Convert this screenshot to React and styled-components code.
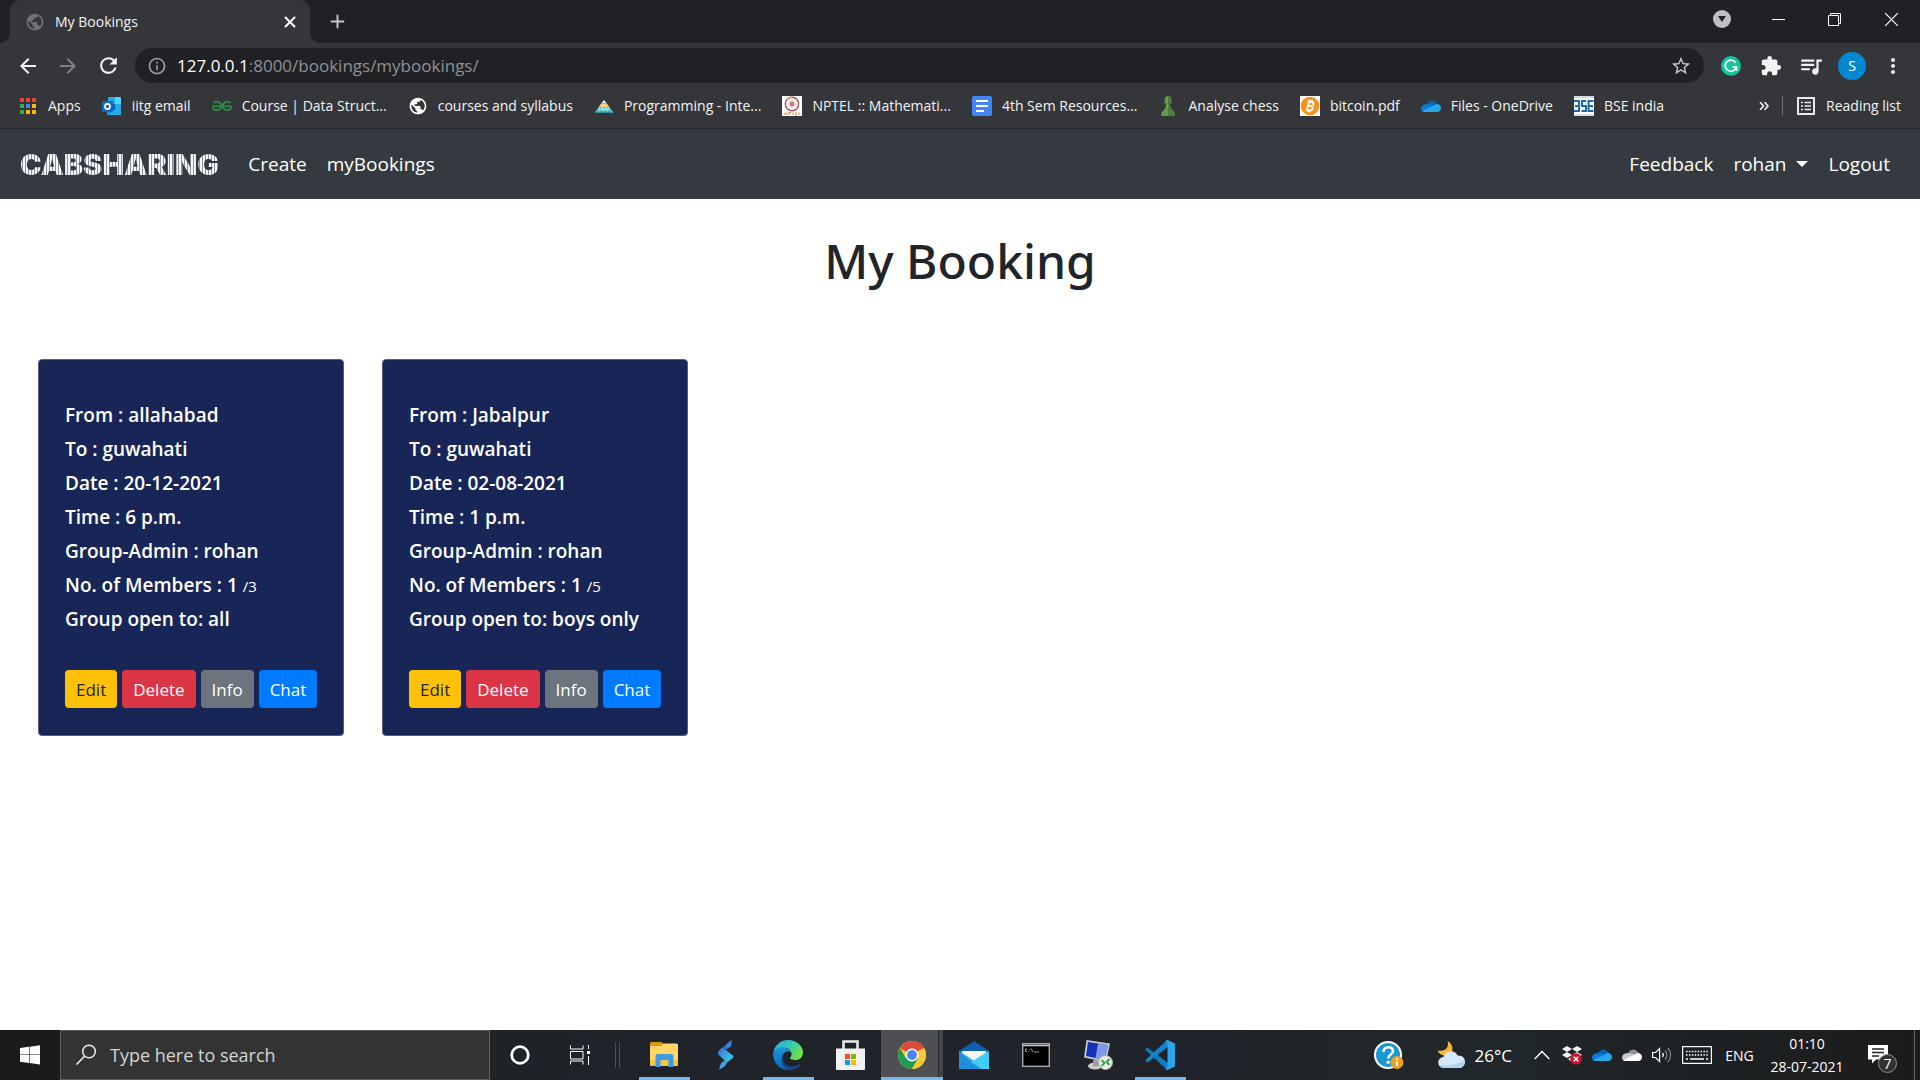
import React from "react";
import styled, { createGlobalStyle, css } from "styled-components";
import {
  MdArrowBack,
  MdArrowForward,
  MdRefresh,
  MdStarBorder,
  MdExtension,
  MdQueueMusic,
  MdMoreVert,
  MdInfoOutline,
  MdAdd,
  MdPublic,
} from "react-icons/md";
import { SiGeeksforgeeks } from "react-icons/si";

const GlobalStyle = createGlobalStyle`
  *, *::before, *::after { box-sizing: border-box; }
  body {
    margin: 0;
    background: #fff;
    color: #212529;
    font-family: "Open Sans", "Noto Sans", sans-serif;
  }
  button, input { font-family: inherit; }
  button { margin: 0; padding: 0; border: 0; background: none; color: inherit; }
  a { color: inherit; text-decoration: none; }
  svg { display: block; flex: none; }
`;

const Screen = styled.div`
  display: flex;
  flex-direction: column;
  min-height: 100vh;
`;

/* ---------- browser window ---------- */

const Chrome = styled.header`
  background: #35363a;
  color: #f1f3f4;
  font-size: 14px;
  border-bottom: 1px solid #28292b;
`;

const TabStrip = styled.div`
  display: flex;
  height: 43px;
  padding-left: 10px;
  background: #202124;
`;

const Tab = styled.div`
  position: relative;
  display: flex;
  align-items: center;
  gap: 10px;
  width: 300px;
  padding: 0 10px 0 15px;
  border-radius: 10px 10px 0 0;
  background: #35363a;

  &::before,
  &::after {
    content: "";
    position: absolute;
    bottom: 0;
    width: 10px;
    height: 10px;
  }
  &::before {
    right: 100%;
    background: radial-gradient(circle at 0 0, transparent 10px, #35363a 10px);
  }
  &::after {
    left: 100%;
    background: radial-gradient(circle at 100% 0, transparent 10px, #35363a 10px);
  }
`;

const TabTitle = styled.span`
  flex: 1;
`;

const IconButton = styled.button`
  display: flex;
  align-items: center;
  justify-content: center;
  width: ${(p) => p.$w || 20}px;
  height: ${(p) => p.$h || 28}px;
  color: ${(p) => p.$color || "#f1f3f4"};
`;

const NewTab = styled(IconButton)`
  align-self: center;
  margin-left: 17px;
`;

const WindowControls = styled.div`
  display: flex;
  align-items: center;
  height: 38px;
  margin-left: auto;
`;

const Toolbar = styled.div`
  display: flex;
  align-items: center;
  height: 45px;
  padding: 0 12px 0 8px;
`;

const AddressBar = styled.form`
  display: flex;
  flex: 1;
  align-items: center;
  height: 35px;
  margin: 0 12px 0 7px;
  padding: 0 12px;
  gap: 10px;
  border-radius: 18px;
  background: #202124;
  color: #9aa0a6;
`;

const Url = styled.a`
  flex: 1;
  font-size: 17px;
  line-height: 24px;
  color: #8e9297;

  b {
    font-weight: 400;
    color: #fff;
  }
`;

const Avatar = styled.button`
  width: 28px;
  height: 28px;
  margin: 0 12px 0 12px;
  border-radius: 50%;
  background: #0288d1;
  color: #fff;
  font-size: 14px;
`;

const BookmarkBar = styled.nav`
  display: flex;
  align-items: center;
  gap: 21px;
  height: 40px;
  padding: 0 19px 4px 18px;
  line-height: 20px;
  white-space: nowrap;
`;

const Bookmark = styled.a`
  display: flex;
  align-items: center;
  gap: 10px;
`;

const BookmarkEnd = styled.div`
  display: flex;
  align-items: center;
  gap: 13px;
  margin-left: auto;
`;

const Divider = styled.span`
  width: 1px;
  height: 20px;
  background: #6a6b6e;
`;

/* ---------- cab sharing site ---------- */

const Navbar = styled.nav`
  display: flex;
  align-items: center;
  gap: 20px;
  height: 70px;
  padding: 0 30px 0 20px;
  background: #343a40;
  color: #fff;
  font-size: 19px;
`;

const Brand = styled.a`
  margin-right: 9px;
  font-family: Inter, "Open Sans", sans-serif;
  font-size: 29px;
  font-weight: 900;
  background: repeating-linear-gradient(90deg, #f6f7fa 0 2px, #8b929c 2px 3px);
  background-clip: text;
  -webkit-background-clip: text;
  color: transparent;
`;

const Spacer = styled.span`
  flex: 1;
`;

const UserMenu = styled.button`
  display: flex;
  align-items: center;
  gap: 10px;
  font-size: 19px;

  &::after {
    content: "";
    border: 6px solid transparent;
    border-top-color: #fff;
    border-bottom: 0;
  }
`;

const Main = styled.main`
  flex: 1;
  padding: 32px 38px;
`;

const Title = styled.h1`
  margin: 0 0 68px;
  font-family: "Noto Sans", "Open Sans", sans-serif;
  font-size: 48px;
  font-weight: 500;
  line-height: 60px;
  text-align: center;
`;

const Cards = styled.div`
  display: flex;
  flex-wrap: wrap;
  gap: 38px;
`;

const Card = styled.article`
  width: 306px;
  padding: 38px 26px 27px;
  border: 1px solid #56607c;
  border-radius: 4px;
  background: #182657;
  color: #fff;
`;

const Line = styled.p`
  margin: 0;
  font-size: 19px;
  font-weight: 600;
  line-height: 34px;

  small {
    font-size: 15px;
    font-weight: 400;
    line-height: 1;
  }
`;

const Actions = styled.div`
  display: flex;
  gap: 5px;
  margin-top: 34px;
`;

const tones = {
  warning: css`background: #ffc107; color: #212529;`,
  danger: css`background: #dc3545;`,
  secondary: css`background: #6c757d;`,
  primary: css`background: #007bff;`,
};

const Action = styled.button`
  height: 38px;
  padding: 0 11px;
  border-radius: 4px;
  font-size: 17px;
  color: #fff;
  ${(p) => tones[p.$tone]}
`;

/* ---------- desktop taskbar ---------- */

const Taskbar = styled.footer`
  display: flex;
  height: 50px;
  background: linear-gradient(90deg, #1a1a1a, #20242a 32%, #20242a 60%, #20272a 78%, #1b1b1c);
  color: #fff;
`;

const TaskButton = styled.button`
  display: flex;
  align-items: center;
  justify-content: center;
  width: ${(p) => p.$w || 60}px;
  font-size: ${(p) => p.$size || 14}px;
`;

const SearchBox = styled.label`
  display: flex;
  align-items: center;
  gap: 13px;
  width: 430px;
  padding-left: 14px;
  border: 1px solid #5f5f5f;
  background: #333;
`;

const SearchInput = styled.input`
  flex: 1;
  min-width: 0;
  padding: 0;
  border: 0;
  outline: 0;
  background: transparent;
  font-size: 18px;

  &::placeholder {
    color: #d4d4d4;
    opacity: 1;
  }
`;

const Grip = styled.span`
  width: 5px;
  height: 26px;
  margin: 12px 13px 12px 5px;
  border: solid #4b4f53;
  border-width: 0 1px;
`;

const AppButton = styled(TaskButton)`
  width: 62px;
  border-bottom: 3px solid transparent;
  padding-top: 3px;
  ${(p) =>
    p.$state === "open" &&
    css`
      background: linear-gradient(#76b9ed, #76b9ed) center bottom / 51px 3px no-repeat border-box;
    `}
  ${(p) =>
    p.$state === "active" &&
    css`
      border-bottom-color: #76b9ed;
      background: linear-gradient(90deg, #4d4f52 57px, #2b2e31 57px 58px, #44474a 58px);
    `}
`;

const Tray = styled.div`
  display: flex;
  margin-left: auto;
`;

const Weather = styled(TaskButton)`
  width: auto;
  gap: 10px;
  padding: 0 15px 0 18px;
`;

const Clock = styled.time`
  display: flex;
  flex-direction: column;
  justify-content: center;
  width: 90px;
  font-size: 14px;
  line-height: 23px;
  text-align: center;
`;

const ShowDesktop = styled.button`
  width: 6px;
  border-left: 1px solid #66696b;
`;

/* ---------- drawings ---------- */

const Globe = ({ color = "#fff" }) => <MdPublic size={20} color={color} aria-hidden="true" />;

const Svg = ({ s = 20, w, h, box = "0 0 20 20", children }) => (
  <svg width={w || s} height={h || s} viewBox={box} fill="none" aria-hidden="true">
    {children}
  </svg>
);

const AppsIcon = () => (
  <Svg>
    {["#ea4335", "#ea4335", "#ea4335", "#34a853", "#4285f4", "#fbbc04", "#34a853", "#fbbc04", "#fbbc04"].map((c, i) => (
      <rect key={i} x={2 + (i % 3) * 6} y={2 + Math.floor(i / 3) * 6} width="4" height="4" fill={c} />
    ))}
  </Svg>
);

const OutlookIcon = () => (
  <Svg>
    <rect x="6" y="1" width="13" height="14" rx="1" fill="#28a8ea" />
    <path d="M13 1h5l1 1v6h-6z" fill="#50d9ff" />
    <path d="M6 8h7v6H6z" fill="#0364b8" />
    <path d="M5 10l8 5 6-5v9H5z" fill="#1490df" />
    <path d="M5 19l14-9v9z" fill="#28a8ea" />
    <rect x="0" y="5" width="11" height="11" rx="1" fill="#0f6cbd" />
    <circle cx="5.5" cy="10.5" r="2.6" stroke="#fff" strokeWidth="1.6" />
  </Svg>
);

const PyramidIcon = () => (
  <Svg>
    <path d="M10 4l3 3.500H7z" fill="#dfeef0" />
    <path d="M7 7.500h6l3 4.500H4z" fill="#f6b257" />
    <path d="M4 12h12l3.500 4.500h-19z" fill="#56c3cf" />
    <path d="M7 8.500l1.500 2 1.500-2 1.500 2 1.500-2M4.500 12.500l1.800 2 1.800-2 1.900 2 1.900-2 1.800 2 1.800-2" stroke="#fff" />
    <path d="M1 17l2-2.500L5 17l2-2.500L9 17l2-2.500 2 2.500 2-2.500 2 2.500 2-1" stroke="#2aa9b9" />
  </Svg>
);

const NptelIcon = () => (
  <Svg>
    <path d="M0 0h20v20H0z" fill="#fff" />
    <circle cx="10" cy="8" r="6.700" stroke="#a8525a" strokeWidth="1.400" />
    <path d="M5 3.500a6.700 6.700 0 0 1 5-2.200" stroke="#e5a24e" strokeWidth="1.500" />
    <circle cx="10" cy="8" r="2" fill="#c23f4b" />
    <path d="M10 4v8M6 8h8M7 5l6 6M13 5l-6 6" stroke="#c98288" strokeWidth=".9" />
    <path d="M3 16.500v2.500M5 19v-2.500M7 19v-2.500h2M11 16.500v2.500M13 17h2M13 19h2M17 16.500V19" stroke="#d0843c" />
  </Svg>
);

const DocsIcon = () => (
  <Svg>
    <rect width="20" height="20" rx="2" fill="#4285f4" />
    <path d="M4 5h12M4 10h12M4 15h8" stroke="#fff" strokeWidth="2" />
  </Svg>
);

const PawnIcon = () => (
  <Svg>
    <path d="M10 0a3.300 3.300 0 0 1 2.300 5.700H14v1.600h-2.100c.1 4 1 5.400 2.900 7.200 1.900 1.700 2.200 3.500 1.900 5.500H3.300c-.3-2 0-3.800 1.900-5.500 1.900-1.800 2.800-3.200 2.900-7.200H6V5.700h1.700A3.300 3.300 0 0 1 10 0z" fill="#629f4b" />
    <path d="M10 0a3.300 3.300 0 0 1 2.300 5.700H14v1.600h-2.100c.1 4 1 5.400 2.900 7.200 1.900 1.700 2.200 3.500 1.900 5.500H10z" fill="#4c803a" />
  </Svg>
);

const BitcoinIcon = () => (
  <Svg>
    <path d="M0 0h20v20H0z" fill="#fff" />
    <circle cx="10" cy="10" r="9.300" fill="#f7931a" />
    <g stroke="#fff" strokeWidth="1.700" transform="rotate(14 10 10)">
      <path d="M6.500 5.800H11a2 2 0 0 1 0 4.100H8m3 0a2.100 2.100 0 0 1 0 4.300H6.500M8 5.800v8.400M8.800 3.800v2M11 3.800v2M8.800 14v2.200M11 14v2.200" />
    </g>
  </Svg>
);

const CloudIcon = ({ gray }) => (
  <Svg>
    <path d="M6 9a5.500 5.500 0 0 1 10-2l1 3-8 3-6-3z" fill={gray ? "#8e8e8e" : "#0364b8"} />
    <path d="M4.500 8.200C1.500 8.200 0 10.500 0 12.500S1.600 16 3 16l12-5c-4-3-7-3-10.500-2.800z" fill={gray ? "#c9c9c9" : "#0f78d4"} />
    <path d="M11 10.500l4-2.300c3-.5 5 1.500 5 3.800 0 2-1.200 4-4 4H4c-1.200 0-2-.4-2.700-1z" fill={gray ? "#fff" : "#28a8ea"} />
  </Svg>
);

const BseIcon = () => (
  <Svg>
    <path d="M0 0h20v20H0z" fill="#fff" />
    <path d="M0 1h20M0 19h20" stroke="#a9b4bc" />
    <path d="M0 5h5v10H0M1 10h4M12 5H8v5h4v5H7.500M19.500 5H14.500v10h5M15 10h4" stroke="#1769aa" strokeWidth="1.900" />
  </Svg>
);

const ReadingIcon = () => (
  <Svg>
    <rect x="2" y="2" width="16" height="16" stroke="#e8eaed" strokeWidth="2" />
    <path d="M5 6.500h2M5 10h2M5 13.500h2M8.500 6.500H15M8.500 10H15M8.500 13.500H15" stroke="#e8eaed" strokeWidth="1.500" />
  </Svg>
);

const GrammarlyIcon = () => (
  <Svg>
    <circle cx="10" cy="10" r="10" fill="#15c39a" />
    <path d="M14.500 6.500A5.600 5.600 0 1 0 15.300 11h-3.800M15.500 10.800v4" stroke="#fff" strokeWidth="1.700" />
  </Svg>
);

const DropdownBadge = () => (
  <Svg>
    <circle cx="10" cy="10" r="9" fill="#bdc1c6" />
    <path d="M6 7h8l-4 6z" fill="#202124" />
  </Svg>
);

const WindowsIcon = () => (
  <Svg>
    <path d="M0 3l9-1.200v7.700H0zM9.600 1.700L20 .2v9.300H9.600zM0 10.100h9v7.900l-9-1.200zM9.600 10.100H20v9.400L9.600 18z" fill="#fff" />
  </Svg>
);

const SearchIcon = () => (
  <Svg s={22} box="0 0 22 22">
    <circle cx="14" cy="7.500" r="6.300" stroke="#ececec" strokeWidth="1.500" />
    <path d="M9.500 12.200L1.500 20.500" stroke="#ececec" strokeWidth="1.600" />
  </Svg>
);

const CortanaIcon = () => (
  <Svg>
    <circle cx="10" cy="10" r="8.300" stroke="#fff" strokeWidth="2.800" />
  </Svg>
);

const TaskViewIcon = () => (
  <Svg>
    <path d="M.5.500v3.500h12.500v-3.500M.5 6.500h12.500v7.500H.5zM.5 19.500v-3.500h12.500v3.500M18.500 0v4M18.500 11v9" stroke="#fff" />
    <path d="M17 6h3v3h-3z" fill="#fff" />
  </Svg>
);

const FolderIcon = () => (
  <Svg s={28} box="0 0 28 28">
    <path d="M0 2.500C0 1.500.5 1 1.500 1h10l1.500 2v3H0z" fill="#d99a0b" />
    <path d="M13 2.500h13c1 0 2 .5 2 1.500v20H0V6.500C0 5.500.5 5 1.500 5h10z" fill="#ffd667" />
    <path d="M0 19h28v5c0 .6-.5 1-1 1H1c-.6 0-1-.4-1-1z" fill="#f7c546" />
    <path d="M5.500 26V15.500c0-1.700 1-2.500 2.500-2.500h13c1.500 0 2.500.8 2.500 2.500V26h-5v-7h-8v7z" fill="#3d9be3" />
  </Svg>
);

const BoltIcon = () => (
  <Svg w={18} h={32} box="0 0 18 32">
    <defs>
      <linearGradient id="bolt" x1="0" y1="0" x2="1" y2="1">
        <stop stopColor="#3767d9" />
        <stop offset="1" stopColor="#3fd8ee" />
      </linearGradient>
    </defs>
    <path d="M8 6.500L2.500 11c-2 2-2 3.500-.5 5.200l8 7.300 5.700-4.500c1-.8 1-1.500.2-2.400L7.500 10z" fill="url(#bolt)" />
    <path d="M15 1l-1 6.500-5.500 3.200-.3-3.700C9.500 4.500 12 2.500 15 1z" fill="#3f7de0" />
    <path d="M9.500 20.500L4 24 2 31l6-4 2-3.500z" fill="#3da4e8" />
  </Svg>
);

const EdgeIcon = () => (
  <Svg s={30} box="0 0 30 30">
    <defs>
      <linearGradient id="edgeTop" x1="0" x2="1" y1="0" y2=".5">
        <stop stopColor="#2aa7e0" />
        <stop offset=".5" stopColor="#34c3c0" />
        <stop offset="1" stopColor="#6be34a" />
      </linearGradient>
      <linearGradient id="edgeSide" x1="0" x2="0" y1="0" y2="1">
        <stop stopColor="#1b95dd" />
        <stop offset="1" stopColor="#0c62bd" />
      </linearGradient>
    </defs>
    <path d="M.2 13.500C1 6 7 0 15 0c8.500 0 15 6 15 12.500 0 5-3.500 7.500-7.500 7.500-3.500 0-5.500-1.200-5.500-2 0-.6 1.600-1.300 1.600-4C18.600 10.500 15 7.800 10 7.800 5.500 7.800 1.500 10 .2 13.500z" fill="url(#edgeTop)" />
    <path d="M.1 14C1.500 9.500 5.500 7.700 10 7.700c4.500 0 8 2.600 8.300 5.300-1-1.300-2.500-2-4.500-1.500C10.500 12.300 9 15.500 9.500 19c.7 5 5 9 9.500 10.400C8.500 32 0 24 .1 14z" fill="url(#edgeSide)" />
    <path d="M11.500 12.800C9 15 8.800 19.500 11.500 23c3.500 4.500 10 4.500 14.500 1.500.8-.5 1.500 0 1 1C25 28 20.500 30 16 30 8 28.500 6 18 11.500 12.800z" fill="#114a8b" />
  </Svg>
);

const StoreIcon = () => (
  <Svg w={29} h={30} box="0 0 29 30">
    <path d="M7.500 11V1.500h14V11" stroke="#e9e9e9" strokeWidth="2.600" />
    <path d="M0 8.500h29V29c0 .6-.4 1-1 1H1c-.6 0-1-.4-1-1z" fill="#f2f2f2" />
    <path d="M9 14h5v5H9z" fill="#f25022" />
    <path d="M15 14h5v5h-5z" fill="#7fba00" />
    <path d="M9 20h5v5H9z" fill="#00a4ef" />
    <path d="M15 20h5v5h-5z" fill="#ffb900" />
  </Svg>
);

const ChromeIcon = () => (
  <Svg s={28} box="0 0 28 28">
    <circle cx="14" cy="14" r="14" fill="#fcc934" />
    <path d="M14 14L1.900 7a14 14 0 0 1 24.200 0z" fill="#dd4b3e" />
    <path d="M14 0a14 14 0 0 1 12.100 7H14z" fill="#dd4b3e" />
    <path d="M1.900 7a14 14 0 0 0 12.100 21l6-10.500L14 14 8 17.500z" fill="#1e9b54" />
    <path d="M14 28l6.100-10.500L20 10l6.100-3A14 14 0 0 1 14 28z" fill="#fcc934" />
    <circle cx="14" cy="14" r="6.500" fill="#fff" />
    <circle cx="14" cy="14" r="5" fill="#4688f1" />
  </Svg>
);

const MailIcon = () => (
  <Svg w={30} h={30} box="0 0 30 30">
    <path d="M0 11L15 1l15 10v4H0z" fill="#0f5fae" />
    <path d="M3 11h24v12H3z" fill="#f5f5f5" />
    <path d="M0 11l15 9.500L30 11v18H0z" fill="#33bdf0" />
    <path d="M0 11l22 18H0z" fill="#1f8fe0" />
    <path d="M30 11L12 22l11 7h7z" fill="#40cdf7" />
  </Svg>
);

const TerminalIcon = () => (
  <Svg w={28} h={24} box="0 0 28 24">
    <rect x=".7" y=".7" width="26.600" height="22.600" fill="#000" stroke="#a5a9ad" strokeWidth="1.400" />
    <path d="M1 2.500h26" stroke="#c3c6c9" strokeWidth="1.600" />
    <path d="M5 6H3.500v2.500H5M7 6v.8M7 8v.8M9 5.500l2 3.500M12 9h5" stroke="#b5b5b5" strokeWidth=".9" />
  </Svg>
);

const RemoteIcon = () => (
  <Svg s={30} box="0 0 30 30">
    <ellipse cx="12" cy="26" rx="7" ry="3.500" fill="#c9ccd0" />
    <path d="M10 20h6v6h-6z" fill="#9b9fa5" />
    <path d="M3.500 0L27 3.500 23 22 1 17.500z" fill="#c5c9cf" />
    <path d="M5 2l20 3-3.500 15L3 16z" fill="#1730b8" />
    <path d="M15 3.500L25 5l-3.500 15-9-2z" fill="#7f9be8" />
    <circle cx="22.500" cy="22.500" r="7" fill="#e9ebe9" stroke="#a9adaa" />
    <path d="M18.500 20l3 3-3 3M26.500 19l-3 3 3 3" stroke="#35a33c" strokeWidth="1.800" />
  </Svg>
);

const CodeIcon = () => (
  <Svg s={30} box="0 0 30 30">
    <path d="M0 9.500L2.500 7.500 23 23v6.500L20.500 28.500z" fill="#0f7cc0" />
    <path d="M0 20.500l2.500 2L23 7V.5l-2.500 1z" fill="#1584c9" />
    <path d="M22.500 0L30 3.500v23L22.500 30c-1 0-1.500-.5-2-1.500l2-1.500V3l-2-1.500c.5-1 1-1.500 2-1.500z" fill="#2ba5ee" />
  </Svg>
);

const HelpIcon = () => (
  <Svg s={30} box="0 0 30 30">
    <circle cx="14" cy="15" r="13" fill="#1b97d4" stroke="#fff" strokeWidth="2" />
    <path d="M9.500 12c0-6.500 9.500-6 9.500-1 0 3.500-4.800 3.500-4.800 7.500" stroke="#fff" strokeWidth="2.600" />
    <circle cx="14.200" cy="22.200" r="1.700" fill="#fff" />
    <circle cx="23" cy="22.500" r="6.500" fill="#f0a21c" />
    <path d="M23 21v5M23 18v1.800" stroke="#fff" strokeWidth="1.800" />
  </Svg>
);

const WeatherIcon = () => (
  <Svg s={28} box="0 0 28 28">
    <path d="M10.500 0c2 5.500-1.500 11-10 9.500 2 5 8 6.500 12 4C17 10.500 16.500 3 10.500 0z" fill="#fbb72c" />
    <path d="M7 27a5.500 5.500 0 0 1-.5-11 7.500 7.500 0 0 1 14-1.500C25 14 28 17 28 20.500S25.500 27 22 27z" fill="#d5e9fb" />
    <path d="M7 27c-2.500 0-4-1-5-3 8 1 18 0 26-4.500C28.500 24 25.500 27 22 27z" fill="#aed3f6" />
  </Svg>
);

const ChevronUp = () => (
  <Svg s={16} box="0 0 16 16">
    <path d="M.7 12L8 4.500l7.300 7.500" stroke="#fff" strokeWidth="1.400" />
  </Svg>
);

const DropboxIcon = () => (
  <Svg>
    <path d="M5 1l5 3-5 3-5-3zM15 1l5 3-5 3-5-3zM5 7l5 3-5 3-5-3zM15 7l5 3-5 3-5-3zM10 11.500l4 2.500-4 3-4-3z" fill="#f3f3f3" />
    <circle cx="14" cy="14" r="5.800" fill="#d0122d" />
    <path d="M11.800 11.800l4.400 4.400M16.200 11.800l-4.400 4.400" stroke="#fff" strokeWidth="1.500" />
  </Svg>
);

const SpeakerIcon = () => (
  <Svg>
    <path d="M.6 7.500h3l4-4v13l-4-4h-3z" stroke="#fff" strokeWidth="1.200" />
    <path d="M10.500 8c1 1.200 1 2.800 0 4" stroke="#fff" strokeWidth="1.200" />
    <path d="M13 5.500c2.500 2.500 2.500 6.500 0 9M15.800 3c3.700 4 3.700 10 0 14" stroke="#85898c" strokeWidth="1.200" />
  </Svg>
);

const KeyboardIcon = () => (
  <Svg w={30} h={18} box="0 0 30 18">
    <rect x=".6" y=".6" width="28.800" height="16.800" stroke="#fff" strokeWidth="1.200" />
    <path d="M4 5.500h22M4 9h22" stroke="#fff" strokeWidth="1.500" strokeDasharray="1.500 1.400" />
    <path d="M4 13h2M8 13h14M24 13h2" stroke="#fff" strokeWidth="1.500" />
  </Svg>
);

const NoticeIcon = () => (
  <Svg w={30} h={36} box="0 0 30 36">
    <path d="M0 8h20v14.500H8l-4 4v-4H0z" fill="#fff" />
    <path d="M4 12h12M4 15.500h12M4 19h7" stroke="#222" strokeWidth="1.400" />
    <circle cx="19.500" cy="26.500" r="9" fill="#2f3132" stroke="#8b8d8e" />
    <text x="19.500" y="31.500" fill="#fff" fontSize="14" textAnchor="middle">7</text>
  </Svg>
);

/* ---------- content ---------- */

const bookmarks = [
  [AppsIcon, "Apps"],
  [OutlookIcon, "iitg email"],
  [() => <SiGeeksforgeeks size={20} color="#2f8d46" aria-hidden="true" />, "Course | Data Struct..."],
  [Globe, "courses and syllabus"],
  [PyramidIcon, "Programming - Inte..."],
  [NptelIcon, "NPTEL :: Mathemati..."],
  [DocsIcon, "4th Sem Resources..."],
  [PawnIcon, "Analyse chess"],
  [BitcoinIcon, "bitcoin.pdf"],
  [CloudIcon, "Files - OneDrive"],
  [BseIcon, "BSE india"],
];

const bookings = [
  { from: "allahabad", to: "guwahati", date: "20-12-2021", time: "6 p.m.", admin: "rohan", members: 1, size: 3, open: "all" },
  { from: "Jabalpur", to: "guwahati", date: "02-08-2021", time: "1 p.m.", admin: "rohan", members: 1, size: 5, open: "boys only" },
];

const apps = [
  ["File Explorer", FolderIcon, "open"],
  ["Launcher", BoltIcon],
  ["Edge", EdgeIcon, "open"],
  ["Store", StoreIcon],
  ["Chrome", ChromeIcon, "active"],
  ["Mail", MailIcon],
  ["Command Prompt", TerminalIcon],
  ["Remote Desktop", RemoteIcon],
  ["Visual Studio Code", CodeIcon, "open"],
];

const Booking = ({ b }) => (
  <Card>
    <Line>From : {b.from}</Line>
    <Line>To : {b.to}</Line>
    <Line>Date : {b.date}</Line>
    <Line>Time : {b.time}</Line>
    <Line>Group-Admin : {b.admin}</Line>
    <Line>
      No. of Members : {b.members} <small>/{b.size}</small>
    </Line>
    <Line>Group open to: {b.open}</Line>
    <Actions>
      <Action $tone="warning">Edit</Action>
      <Action $tone="danger">Delete</Action>
      <Action $tone="secondary">Info</Action>
      <Action $tone="primary">Chat</Action>
    </Actions>
  </Card>
);

export default function App() {
  return (
    <Screen>
      <GlobalStyle />
      <Chrome>
        <TabStrip>
          <Tab>
            <Globe color="#6f7377" />
            <TabTitle>My Bookings</TabTitle>
            <IconButton aria-label="Close tab">
              <Svg s={12} box="0 0 12 12"><path d="M1 1l10 10M11 1L1 11" stroke="#fff" strokeWidth="2" /></Svg>
            </IconButton>
          </Tab>
          <NewTab aria-label="New tab" $color="#c4c7ca"><MdAdd size={23} /></NewTab>
          <WindowControls>
            <IconButton $w={56} aria-label="Search tabs"><DropdownBadge /></IconButton>
            <IconButton $w={56} aria-label="Minimise">
              <Svg s={13} box="0 0 13 13"><path d="M0 6.500h13" stroke="#fff" /></Svg>
            </IconButton>
            <IconButton $w={56} aria-label="Restore">
              <Svg s={13} box="0 0 13 13"><path d="M.5 2.500h10v10H.5zM2.500 2.500V.5h10v10h-2" stroke="#fff" /></Svg>
            </IconButton>
            <IconButton $w={58} aria-label="Close">
              <Svg s={13} box="0 0 13 13"><path d="M0 0l13 13M13 0L0 13" stroke="#fff" strokeWidth="1.200" /></Svg>
            </IconButton>
          </WindowControls>
        </TabStrip>
        <Toolbar>
          <IconButton $w={40} aria-label="Back"><MdArrowBack size={24} /></IconButton>
          <IconButton $w={40} $color="#7d7f82" aria-label="Forward"><MdArrowForward size={24} /></IconButton>
          <IconButton $w={40} aria-label="Reload"><MdRefresh size={25} /></IconButton>
          <AddressBar>
            <MdInfoOutline size={20} />
            <Url href="#"><b>127.0.0.1</b>:8000/bookings/mybookings/</Url>
            <IconButton type="button" $w={22} $color="#c4c7ca" aria-label="Bookmark"><MdStarBorder size={22} /></IconButton>
          </AddressBar>
          <IconButton $w={30} aria-label="Grammarly"><GrammarlyIcon /></IconButton>
          <IconButton $w={50} aria-label="Extensions"><MdExtension size={22} /></IconButton>
          <IconButton $w={30} aria-label="Media"><MdQueueMusic size={26} /></IconButton>
          <Avatar>S</Avatar>
          <IconButton $w={30} aria-label="Menu"><MdMoreVert size={24} /></IconButton>
        </Toolbar>
        <BookmarkBar>
          {bookmarks.map(([Icon, name]) => (
            <Bookmark href="#" key={name}><Icon />{name}</Bookmark>
          ))}
          <BookmarkEnd>
            <button aria-label="More bookmarks">
              <Svg w={10} h={8} box="0 0 10 8"><path d="M1 0l3.500 4L1 8M5.500 0L9 4 5.500 8" stroke="#f1f3f4" strokeWidth="1.600" /></Svg>
            </button>
            <Divider />
            <Bookmark href="#"><ReadingIcon />Reading list</Bookmark>
          </BookmarkEnd>
        </BookmarkBar>
      </Chrome>

      <Navbar>
        <Brand href="#">CABSHARING</Brand>
        <a href="#">Create</a>
        <a href="#">myBookings</a>
        <Spacer />
        <a href="#">Feedback</a>
        <UserMenu>rohan</UserMenu>
        <a href="#">Logout</a>
      </Navbar>
      <Main>
        <Title>My Booking</Title>
        <Cards>
          {bookings.map((b) => <Booking key={b.from} b={b} />)}
        </Cards>
      </Main>

      <Taskbar>
        <TaskButton aria-label="Start"><WindowsIcon /></TaskButton>
        <SearchBox>
          <SearchIcon />
          <SearchInput placeholder="Type here to search" aria-label="Search" />
        </SearchBox>
        <TaskButton aria-label="Cortana"><CortanaIcon /></TaskButton>
        <TaskButton aria-label="Task view"><TaskViewIcon /></TaskButton>
        <Grip />
        {apps.map(([name, Icon, state]) => (
          <AppButton key={name} aria-label={name} $state={state}><Icon /></AppButton>
        ))}
        <Tray>
          <TaskButton aria-label="Help"><HelpIcon /></TaskButton>
          <Weather $size={17}><WeatherIcon />26°C</Weather>
          <TaskButton $w={30} aria-label="Hidden icons"><ChevronUp /></TaskButton>
          <TaskButton $w={30} aria-label="Dropbox"><DropboxIcon /></TaskButton>
          <TaskButton $w={30} aria-label="OneDrive"><CloudIcon /></TaskButton>
          <TaskButton $w={30} aria-label="OneDrive personal"><CloudIcon gray /></TaskButton>
          <TaskButton $w={30} aria-label="Volume"><SpeakerIcon /></TaskButton>
          <TaskButton $w={40} aria-label="Keyboard"><KeyboardIcon /></TaskButton>
          <TaskButton $w={45}>ENG</TaskButton>
          <Clock><span>01:10</span><span>28-07-2021</span></Clock>
          <TaskButton $w={62} aria-label="Notifications"><NoticeIcon /></TaskButton>
          <ShowDesktop aria-label="Show desktop" />
        </Tray>
      </Taskbar>
    </Screen>
  );
}
